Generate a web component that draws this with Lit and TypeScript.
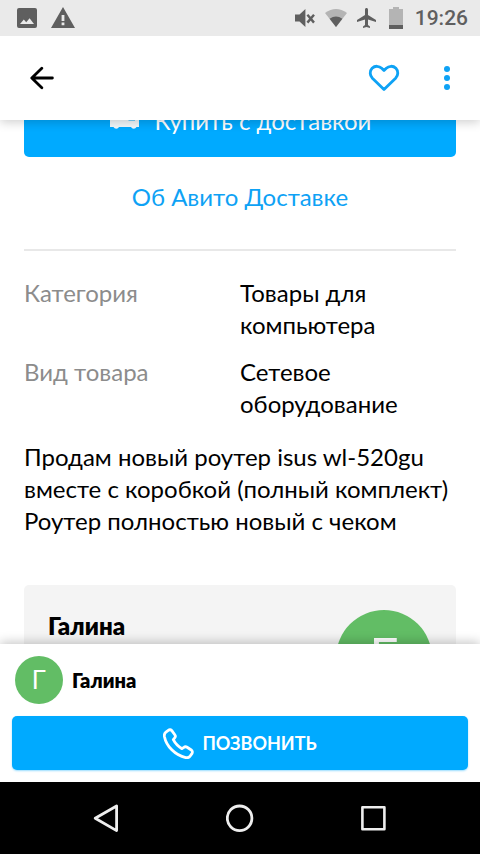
import { LitElement, html, css } from "lit";
import { customElement } from "lit/decorators.js";

@customElement("status-bar")
class StatusBar extends LitElement {
  static styles = css`
    :host {
      display: flex;
      align-items: center;
      justify-content: space-between;
      height: 36px;
      flex: none;
      padding: 0 12px 0 17px;
      background: #eaeaea;
      color: #5f5f5f;
      font: 500 21px/36px Roboto, "Liberation Sans", sans-serif;
      position: relative;
      z-index: 2;
    }
    .group {
      display: flex;
      align-items: center;
      gap: 10px;
    }
    .left {
      gap: 14px;
    }
    svg {
      display: block;
      fill: currentColor;
    }
  `;

  render() {
    return html`
      <div class="group left">
        <svg width="20" height="20" viewBox="0 0 20 20" aria-hidden="true">
          <path fill-rule="evenodd" d="M2 0H18Q20 0 20 2V18Q20 20 18 20H2Q0 20 0 18V2Q0 0 2 0ZM3 16H17L12.6 10.2L9.2 14.2L6.8 11.6Z" />
        </svg>
        <svg width="24" height="22" viewBox="0 0 24 22" aria-hidden="true">
          <path fill-rule="evenodd" d="M12 0L24 21H0ZM10.600 8V14H13.400V8ZM10.600 15.600V18.200H13.400V15.600Z" />
        </svg>
      </div>
      <div class="group">
        <svg width="20" height="18" viewBox="0 0 20 18" aria-hidden="true">
          <path d="M0 5.5H4.5L10.4 0V18L4.5 12.5H0Z" />
          <path d="M12.4 5.800L19 13.600M19 5.800L12.400 13.600" fill="none" stroke="currentColor" stroke-width="2.400" />
        </svg>
        <svg width="22" height="18" viewBox="0 0 22 18" aria-hidden="true">
          <path d="M0 4Q11 -4 22 4L11 18Z" fill="#b4b4b4" />
          <path d="M4.6 9.8Q11 5.4 17.4 9.8L11 18Z" />
        </svg>
        <svg width="20" height="20" viewBox="2 2 20 20" aria-hidden="true">
          <path d="M21 16v-2l-8-5V3.500c0-.83-.67-1.500-1.500-1.500S10 2.670 10 3.500V9l-8 5v2l8-2.500V19l-2 1.500V22l3.500-1 3.500 1v-1.500L13 19v-5.500l8 2.500z" />
        </svg>
        <svg width="18" height="22" viewBox="0 0 18 22" aria-hidden="true">
          <path d="M6 0H12V2H16V18H2V2H6Z" fill="#b4b4b4" />
          <path d="M2 18H16V22H2Z" />
        </svg>
        <span>19:26</span>
      </div>
    `;
  }
}

@customElement("top-bar")
class TopBar extends LitElement {
  static styles = css`
    :host {
      display: flex;
      align-items: center;
      height: 84px;
      flex: none;
      padding: 0 9px 0 18px;
      background: #fff;
      box-shadow: 0 2px 10px rgba(0, 0, 0, 0.2);
      position: relative;
      z-index: 1;
      box-sizing: border-box;
    }
    button {
      display: grid;
      place-items: center;
      width: 48px;
      height: 48px;
      padding: 0;
      border: 0;
      background: none;
      color: #0ea2f5;
    }
    .back {
      color: #000;
      margin-right: auto;
    }
    .actions {
      display: flex;
      gap: 15px;
    }
    svg {
      display: block;
    }
  `;

  render() {
    return html`
      <button class="back" aria-label="Назад">
        <svg width="24" height="24" viewBox="0 0 24 24" fill="none" stroke="currentColor" stroke-width="2.800" stroke-linecap="round" stroke-linejoin="round">
          <path d="M11.800 2.200L1.800 12L11.800 21.800M2 12H22.400" />
        </svg>
      </button>
      <div class="actions">
        <button aria-label="В избранное">
          <svg width="32" height="28" viewBox="0 0 32 28" fill="none" stroke="currentColor" stroke-width="2.800" stroke-linejoin="round">
            <path d="M16 25.600L4.400 14.200C1.500 11.200 1.600 7 4.100 4.300C6.900 1.500 11.200 1.700 13.700 4.300L16 6.600L18.300 4.300C20.800 1.700 25.100 1.500 27.900 4.300C30.400 7 30.500 11.200 27.600 14.200Z" />
          </svg>
        </button>
        <button aria-label="Ещё">
          <svg width="6" height="24" viewBox="0 0 6 24" fill="currentColor">
            <circle cx="3" cy="3" r="3" />
            <circle cx="3" cy="12" r="3" />
            <circle cx="3" cy="21" r="3" />
          </svg>
        </button>
      </div>
    `;
  }
}

@customElement("contact-bar")
class ContactBar extends LitElement {
  static styles = css`
    :host {
      display: flex;
      flex-direction: column;
      gap: 12px;
      flex: none;
      padding: 12px;
      background: #fff;
      box-shadow: 0 -2px 10px rgba(0, 0, 0, 0.22);
      position: relative;
      z-index: 1;
    }
    .seller {
      display: flex;
      align-items: center;
      gap: 9px;
      padding-left: 3px;
      font-size: 20px;
      font-weight: 800;
    }
    .avatar {
      display: grid;
      place-items: center;
      width: 48px;
      height: 48px;
      border-radius: 50%;
      background: #62bd65;
      color: #fff;
      font: 400 26px/48px Roboto, "Liberation Sans", sans-serif;
    }
    .call {
      display: flex;
      align-items: center;
      justify-content: center;
      gap: 8px;
      height: 54px;
      padding: 0;
      border: 0;
      border-radius: 5px;
      background: #00aaff;
      box-shadow: 0 1px 2px rgba(0, 170, 255, 0.4);
      color: #fff;
      font: 700 18px/24px Lato, "Liberation Sans", sans-serif;
    }
  `;

  render() {
    return html`
      <div class="seller"><span class="avatar">Г</span><span>Галина</span></div>
      <button class="call">
        <svg width="31" height="31" viewBox="0.500 0.500 31 31" fill="none" stroke="currentColor" stroke-width="2.800" stroke-linejoin="round" aria-hidden="true">
          <path d="M3.400 4.600L5.800 2.800C7 1.900 8.600 2.100 9.500 3.300L12.300 7.200C13.100 8.300 13 9.600 12.100 10.500L10.800 12.200C12.600 15.700 16 19.200 19.500 21.200L21.400 19.900C22.300 19.200 23.500 19.100 24.600 19.800L28.800 22.500C30 23.300 30.200 24.900 29.400 26.100L27.700 28.500C26.800 29.900 25.200 30.500 23.200 30.100C12.600 27.600 3.800 18.700 1.900 8.900C1.600 7.100 2.100 5.600 3.400 4.600Z" />
        </svg>
        <span>ПОЗВОНИТЬ</span>
      </button>
    `;
  }
}

@customElement("system-nav")
class SystemNav extends LitElement {
  static styles = css`
    :host {
      display: flex;
      align-items: center;
      justify-content: center;
      gap: 86px;
      height: 72px;
      flex: none;
      background: #000;
    }
    button {
      display: grid;
      place-items: center;
      width: 48px;
      height: 48px;
      padding: 0;
      border: 0;
      background: none;
      color: #eee;
    }
  `;

  render() {
    return html`
      <button aria-label="Назад">
        <svg width="28" height="28" viewBox="0 0 28 28" fill="none" stroke="currentColor" stroke-width="2.800" stroke-linejoin="round">
          <path d="M24.600 2V26.600L3.200 14.300Z" />
        </svg>
      </button>
      <button aria-label="Домой">
        <svg width="28" height="28" viewBox="0 0 28 28" fill="none" stroke="currentColor" stroke-width="2.800">
          <circle cx="13.600" cy="14.300" r="12.300" />
        </svg>
      </button>
      <button aria-label="Недавние">
        <svg width="26" height="26" viewBox="0 0 26 26" fill="none" stroke="currentColor" stroke-width="2.600" stroke-linejoin="round">
          <rect x="1.400" y="2.300" width="22" height="22" />
        </svg>
      </button>
    `;
  }
}

@customElement("app-root")
class AppRoot extends LitElement {
  static styles = css`
    :host {
      display: flex;
      flex-direction: column;
      height: 100vh;
      overflow: hidden;
      background: #fff;
      color: #000;
      font: 400 24px/32px Lato, "Liberation Sans", sans-serif;
    }
    main {
      flex: 1;
      min-height: 0;
      overflow: hidden;
    }
    .listing {
      display: flex;
      flex-direction: column;
      margin-top: -35px;
      padding: 0 24px;
    }
    .buy {
      display: flex;
      align-items: center;
      justify-content: center;
      gap: 15px;
      height: 72px;
      padding: 0;
      border: 0;
      border-radius: 5px;
      background: #00aaff;
      color: #fff;
      font: inherit;
    }
    .about {
      align-self: center;
      margin: 24px 0 36px;
      color: #0ea2f5;
      text-decoration: none;
    }
    hr {
      width: 100%;
      height: 2px;
      margin: 0 0 26px;
      border: 0;
      background: #e8e8e8;
    }
    dl {
      display: grid;
      grid-template-columns: 1fr 1fr;
      row-gap: 15px;
      margin: 0 0 21px;
    }
    dt {
      color: #8c8c8c;
    }
    dd {
      margin: 0;
    }
    .description {
      margin: 0 0 48px;
      white-space: pre-line;
    }
    .card {
      display: flex;
      justify-content: space-between;
      padding: 25px 24px;
      border-radius: 5px;
      background: #f4f4f4;
    }
    .name {
      margin: 0;
      font-size: 24px;
      font-weight: 800;
    }
    .avatar {
      display: grid;
      place-items: center;
      width: 96px;
      height: 96px;
      border-radius: 50%;
      background: #62bd65;
      color: #fff;
      font: 400 52px/96px Roboto, "Liberation Sans", sans-serif;
    }
  `;

  private description =
    "Продам новый роутер isus wl-520gu вместе с коробкой (полный комплект)\nРоутер полностью новый с чеком";

  render() {
    return html`
      <status-bar></status-bar>
      <top-bar></top-bar>
      <main>
        <div class="listing">
          <button class="buy">
            <svg width="31" height="24" viewBox="0 0 31 24" fill="#f2f8fb" aria-hidden="true">
              <path d="M1 1H17V4H24L30 11V18H27.500A3 3 0 0 1 22 18H10A3 3 0 0 1 4.500 18H1Z" />
              <path d="M19.500 6.500H23L26 10.500V11.500H19.500Z" fill="#00aaff" />
            </svg>
            <span>Купить с доставкой</span>
          </button>
          <a class="about" href="#delivery">Об Авито Доставке</a>
          <hr />
          <dl>
            <dt>Категория</dt>
            <dd>Товары для компьютера</dd>
            <dt>Вид товара</dt>
            <dd>Сетевое оборудование</dd>
          </dl>
          <p class="description">${this.description}</p>
          <section class="card">
            <h2 class="name">Галина</h2>
            <span class="avatar">Г</span>
          </section>
        </div>
      </main>
      <contact-bar></contact-bar>
      <system-nav></system-nav>
    `;
  }
}
